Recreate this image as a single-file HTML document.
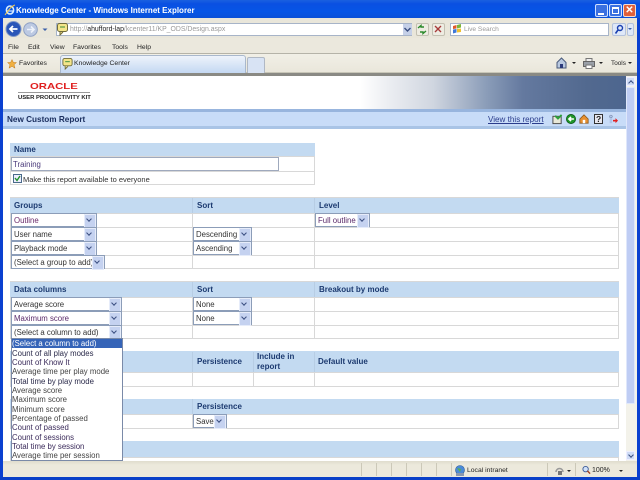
<!DOCTYPE html>
<html><head><meta charset="utf-8">
<style>
html,body{margin:0;padding:0;width:640px;height:480px;overflow:hidden;background:#fff}
body{position:relative;font-family:"Liberation Sans",sans-serif;font-size:7.8px;color:#222;filter:blur(.25px)}
div,span,svg{position:absolute;box-sizing:border-box;white-space:nowrap}
.h{background:#c3daf1;color:#1c3a70;font-weight:bold;font-size:8px;line-height:15px;padding-left:4px}
.l{background:#d8d8d8}
.s{background:#fff;border:1px solid #8c9db8;height:14px;line-height:13.5px;padding-left:2px;color:#333;font-size:7.8px}
.s b{position:absolute;right:0;top:0;width:10px;height:12px;background:#c5d2f0;border:1px solid #e6ecfa}
.s b:after{content:"";position:absolute;left:1.5px;top:2px;width:3px;height:3px;border-right:1.5px solid #3a4e80;border-bottom:1.5px solid #3a4e80;transform:rotate(45deg)}
.it{left:12px;width:108px;height:9.33px;line-height:9.33px;font-size:7.8px;color:#333}
.m{font-size:6.8px;color:#222;line-height:10px;top:43px}
.t{font-size:6.8px;color:#222;line-height:10px}
.c{background:#fff}
.sep{top:463px;width:1px;height:13px;background:#cbc8b8}
.ar{width:0;height:0;border:2px solid transparent;border-top:2px solid #222}
</style></head><body>

<!-- Window frame -->
<div style="left:0;top:0;width:640px;height:19px;background:linear-gradient(#1a60e0,#0a50e2 20%,#0655e6 60%,#0a4fd6)"></div>
<div style="left:0;top:18px;width:3px;height:462px;background:#0a40d0"></div>
<div style="left:637px;top:18px;width:3px;height:462px;background:#0a40d0"></div>
<div style="left:0;top:477px;width:640px;height:3px;background:#0a40c8"></div>
<svg style="left:4px;top:3px" width="12" height="14" viewBox="0 0 12 14"><ellipse cx="6" cy="7" rx="3.6" ry="4" fill="none" stroke="#d8ecff" stroke-width="1.6"/><path d="M2 8h7" stroke="#d8ecff" stroke-width="1.2"/><path d="M1 12C3 9 7 3 11 2" stroke="#f3c94c" stroke-width="1" fill="none"/></svg>
<div style="left:16px;top:4px;color:#fff;font-weight:bold;font-size:8px;line-height:13px">Knowledge Center - Windows Internet Explorer</div>
<div style="left:595px;top:4px;width:13px;height:13px;background:#3a70e0;border:1px solid #cfe0ff;border-radius:2px"><span style="left:2px;top:8px;width:6px;height:2px;background:#fff"></span></div>
<div style="left:609px;top:4px;width:13px;height:13px;background:#3a70e0;border:1px solid #cfe0ff;border-radius:2px"><span style="left:2px;top:2px;width:7px;height:7px;border:1px solid #fff;border-top:2px solid #fff"></span></div>
<div style="left:623px;top:4px;width:13px;height:13px;background:#e0603a;border:1px solid #f6dccf;border-radius:2px;color:#fff;font-weight:bold;font-size:10px;line-height:11px;text-align:center">✕</div>

<!-- Address row -->
<div style="left:3px;top:18px;width:634px;height:21px;background:#e9e6da"></div>
<svg style="left:5px;top:21px" width="44" height="17" viewBox="0 0 44 17">
<circle cx="8.5" cy="8" r="7.5" fill="#2a56b8" stroke="#7f97c8"/><path d="M12.5 8H5M8 5L5 8l3 3" stroke="#fff" stroke-width="1.8" fill="none"/>
<circle cx="25.5" cy="8.500" r="6.800" fill="#bcc9e2" stroke="#8ea0c4"/><path d="M22 8.500h7M26 5.500l3 3-3 3" stroke="#eef2fa" stroke-width="1.6" fill="none"/>
<path d="M37.500 7.500l2.500 2.500 2.500-2.500z" fill="#3a5fa8"/></svg>
<div style="left:56px;top:23px;width:356px;height:13px;background:#fff;border:1px solid #a7b4c8"></div>
<svg style="left:57px;top:23px" width="11" height="13" viewBox="0 0 11 13"><rect x=".5" y=".5" width="10" height="8" rx="2" fill="#f4e58a" stroke="#6f6a3a"/><path d="M3 9v3l3-3" fill="#f4e58a" stroke="#6f6a3a"/><path d="M3 4h5" stroke="#3a8a3a"/></svg>
<div style="left:70px;top:25px;font-size:6.9px;line-height:10px;color:#9a9a9a">http://<span style="position:static;color:#222">ahufford-lap</span>/kcenter11/KP_ODS/Design.aspx</div>
<div style="left:403px;top:24px;width:9px;height:11px;background:#c5d0e8"></div>
<svg style="left:404px;top:27px" width="7" height="6" viewBox="0 0 7 6"><path d="M.5 1l3 3 3-3" stroke="#3a4e80" stroke-width="1.4" fill="none"/></svg>
<div style="left:416px;top:23px;width:13px;height:13px;background:#eeece2;border:1px solid #c3c0b2;border-radius:2px"></div>
<svg style="left:417px;top:24px" width="10" height="11" viewBox="0 0 10 11"><path d="M1 4l3-2.500V3h3M9 7L6 9.500V8H3" fill="none" stroke="#2b8a2b" stroke-width="1.4"/></svg>
<div style="left:432px;top:23px;width:13px;height:13px;background:#eeece2;border:1px solid #c3c0b2;border-radius:2px"></div>
<svg style="left:434px;top:25px" width="8" height="8" viewBox="0 0 8 8"><path d="M1 1l6 6M7 1L1 7" stroke="#a83a3a" stroke-width="1.4"/></svg>
<div style="left:450px;top:23px;width:159px;height:13px;background:#fff;border:1px solid #a7b4c8"></div>
<svg style="left:452px;top:24px" width="10" height="10" viewBox="0 0 10 10"><path d="M1 2l3.500-1v3.500L1 5z" fill="#e0582a"/><path d="M5 1l4-1v3.500L5 4.500z" fill="#7cb53a"/><path d="M1 5.500l3.500-.5v3.500L1 9.500z" fill="#3f78d8"/><path d="M5 5l4-.5V8L5 8.500z" fill="#f0c030"/></svg>
<div style="left:464px;top:25px;font-size:6.6px;line-height:10px;color:#9a9a9a">Live Search</div>
<div style="left:612px;top:23px;width:14px;height:13px;background:#dfe8f8;border:1px solid #b4c2dc;border-radius:2px"></div>
<svg style="left:614px;top:24px" width="10" height="11" viewBox="0 0 10 11"><circle cx="6" cy="4" r="2.500" fill="none" stroke="#1a40b0" stroke-width="1.400"/><path d="M4 6L1.500 9.500" stroke="#1a40b0" stroke-width="1.600"/></svg>
<div style="left:627px;top:23px;width:7px;height:13px;background:#dfe8f8;border:1px solid #b4c2dc;border-radius:2px"></div>
<div style="left:628px;top:28px;width:0;height:0;border:2px solid transparent;border-top:2px solid #3a5fa8"></div>

<!-- Menu row -->
<div style="left:3px;top:38px;width:634px;height:16px;background:#ebe8dd"></div>
<div style="left:3px;top:53px;width:634px;height:1px;background:#b5b3a8"></div>
<div class="m" style="left:8px">File</div><div class="m" style="left:28px">Edit</div><div class="m" style="left:50px">View</div><div class="m" style="left:73px">Favorites</div><div class="m" style="left:112px">Tools</div><div class="m" style="left:137px">Help</div>

<!-- Tab row -->
<div style="left:3px;top:54px;width:634px;height:19px;background:linear-gradient(#f1efe6,#e9e6da)"></div>
<div style="left:3px;top:72px;width:634px;height:1px;background:#c8c6b8"></div>
<div style="left:3px;top:73px;width:634px;height:3px;background:#8a8a84"></div>
<svg style="left:7px;top:59px" width="10" height="10" viewBox="0 0 10 10"><path d="M5 .5l1.400 3H9.500L7 5.700l1 3.500L5 7.300 2 9.200l1-3.500L.5 3.500h3.100z" fill="#f0b040" stroke="#c07a20" stroke-width=".5"/></svg>
<div class="t" style="left:19px;top:59px">Favorites</div>
<div style="left:60px;top:55px;width:186px;height:18px;background:linear-gradient(#eef3fb,#c4d8f2);border:1px solid #a9b8cc;border-bottom:0;border-radius:3px 3px 0 0"></div>
<svg style="left:62px;top:58px" width="11" height="12" viewBox="0 0 11 13"><rect x=".5" y=".5" width="10" height="8" rx="2" fill="#f4e58a" stroke="#6f6a3a"/><path d="M3 9v3l3-3" fill="#f4e58a" stroke="#6f6a3a"/><path d="M3 4h5" stroke="#3a8a3a"/></svg>
<div class="t" style="left:74px;top:59px">Knowledge Center</div>
<div style="left:247px;top:57px;width:18px;height:16px;background:#d8e3f4;border:1px solid #b0b8c4;border-bottom:0;border-radius:2px 2px 0 0"></div>
<svg style="left:556px;top:57px" width="11" height="12" viewBox="0 0 11 12"><path d="M5.500 1L1 5.500V11h9V5.500z" fill="#b8c8e0" stroke="#4a5a7a"/><rect x="4" y="7" width="3" height="4" fill="#2a3a7a"/></svg>
<div class="ar" style="left:572px;top:62px"></div>
<svg style="left:583px;top:58px" width="12" height="11" viewBox="0 0 12 11"><rect x="3" y="0.500" width="6" height="3" fill="#eee" stroke="#777"/><rect x=".5" y="3.500" width="11" height="5" fill="#9aa0a8" stroke="#666"/><rect x="3" y="7" width="6" height="3.500" fill="#fff" stroke="#777"/></svg>
<div class="ar" style="left:599px;top:62px"></div>
<div class="t" style="left:611px;top:59px;font-size:6.400px">Tools</div>
<div class="ar" style="left:628px;top:62px"></div>

<!-- Header banner -->
<div style="left:3px;top:76px;width:623px;height:33px;background:linear-gradient(90deg,#fff 0,#fff 357px,#eceef2 385px,#d0d6e0 430px,#8a9cb8 484px,#64799f 520px,#52698f 584px,#4d668f 623px)"></div>
<div style="left:29.500px;top:81px;color:#e02020;font-size:8.400px;line-height:10px;font-weight:bold;transform:scaleX(1.350);transform-origin:0 0">ORACLE</div>
<div style="left:18px;top:92px;width:72px;height:1px;background:#9a9a9a"></div>
<div style="left:18px;top:94px;color:#222;font-size:5.900px;line-height:9px;font-weight:bold">USER PRODUCTIVITY KIT</div>

<!-- Title band -->
<div style="left:3px;top:109px;width:623px;height:3px;background:#98b5de"></div>
<div style="left:3px;top:112px;width:623px;height:14px;background:#c8dcf8"></div>
<div style="left:3px;top:126px;width:623px;height:3px;background:#a9c4e6"></div>
<div style="left:7px;top:114px;color:#1c3060;font-size:8.200px;line-height:12px;font-weight:bold">New Custom Report</div>
<div style="left:488px;top:114px;color:#2a3c8c;font-size:8.100px;line-height:12px;text-decoration:underline">View this report</div>
<svg style="left:552px;top:114px" width="11" height="11" viewBox="0 0 11 12"><rect x=".5" y="2.500" width="9" height="8" fill="#e8e8d8" stroke="#444"/><path d="M3 2l3 3 4-4" fill="none" stroke="#2aa03a" stroke-width="2"/></svg>
<svg style="left:566px;top:114px" width="10" height="10" viewBox="0 0 12 12"><circle cx="6" cy="6" r="5.500" fill="#20962a" stroke="#0d5a18"/><path d="M9.500 6H3.500M6 3.500L3.500 6 6 8.500" stroke="#fff" stroke-width="1.900" fill="none"/></svg>
<svg style="left:579px;top:114px" width="10" height="10" viewBox="0 0 12 12"><path d="M6 1L1 6v5h10V6z" fill="#e89030" stroke="#8a5a20"/><rect x="4.500" y="7" width="3" height="4" fill="#fff"/></svg>
<svg style="left:594px;top:114px" width="9" height="10" viewBox="0 0 9 10"><rect x=".5" y=".5" width="8" height="9" fill="#e8e8f0" stroke="#333"/></svg>
<div style="left:596px;top:114px;font-size:8.500px;line-height:10px;font-weight:bold;color:#222">?</div>
<svg style="left:608px;top:113px" width="10" height="12" viewBox="0 0 12 12"><circle cx="3.500" cy="3" r="1.700" fill="#b0c4e8" stroke="#5a6a8a" stroke-width=".5"/><rect x="2" y="5" width="3" height="6" fill="#b0c4e8"/><path d="M6 7h3V5l3 3-3 3V9H6z" fill="#e02020"/></svg>

<!-- Scrollbar -->
<div style="left:626px;top:76px;width:11px;height:385px;background:#f3f2ea"></div>
<div style="left:626px;top:77px;width:9px;height:9px;background:#cfdcf6;border:1px solid #eef"></div>
<div style="left:628.500px;top:80.500px;width:4px;height:4px;border-left:1.500px solid #3a4e80;border-top:1.500px solid #3a4e80;transform:rotate(45deg)"></div>
<div style="left:626px;top:87px;width:9px;height:317px;background:#bfcdf4;border:1px solid #dfe7fb;border-radius:1px"></div>
<div style="left:626px;top:451px;width:9px;height:9px;background:#cfdcf6;border:1px solid #eef"></div>
<div style="left:628.500px;top:452.500px;width:4px;height:4px;border-right:1.500px solid #3a4e80;border-bottom:1.500px solid #3a4e80;transform:rotate(45deg)"></div>

<!-- Name table -->
<div class="l" style="left:10px;top:143px;width:305px;height:42px"></div>
<div class="c" style="left:11px;top:157px;width:303px;height:14px"></div>
<div class="c" style="left:11px;top:172px;width:303px;height:12px"></div>
<div class="h" style="left:10px;top:143px;width:305px;height:13px;line-height:13px">Name</div>
<div style="left:11px;top:157px;width:268px;height:14px;background:#fff;border:1px solid #9fa9bd;line-height:13.500px;padding-left:1px;color:#4a3a7a">Training</div>
<div style="left:13px;top:174px;width:9px;height:9px;background:#eef;border:1px solid #4a6a8a"></div>
<svg style="left:14px;top:175px" width="7" height="7" viewBox="0 0 7 7"><path d="M1 3l2 2.500L6 1" stroke="#20902a" stroke-width="1.400" fill="none"/></svg>
<div style="left:23px;top:174px;line-height:11px;font-size:7.500px;color:#333">Make this report available to everyone</div>

<!-- Groups table -->
<div class="l" style="left:10px;top:197px;width:609px;height:72px"></div>
<div class="h" style="left:10px;top:198px;width:609px;height:15px">Groups</div>
<div class="h" style="left:197px;top:198px;width:110px;height:15px;background:none;padding:0">Sort</div>
<div class="h" style="left:319px;top:198px;width:110px;height:15px;background:none;padding-left:0">Level</div>
<div style="left:192px;top:198px;width:1px;height:15px;background:#b7cde4"></div>
<div style="left:314px;top:198px;width:1px;height:15px;background:#b7cde4"></div>
<div class="c" style="left:11px;top:214px;width:181px;height:13px"></div><div class="c" style="left:193px;top:214px;width:121px;height:13px"></div><div class="c" style="left:315px;top:214px;width:303px;height:13px"></div>
<div class="c" style="left:11px;top:228px;width:181px;height:13px"></div><div class="c" style="left:193px;top:228px;width:121px;height:13px"></div><div class="c" style="left:315px;top:228px;width:303px;height:13px"></div>
<div class="c" style="left:11px;top:242px;width:181px;height:13px"></div><div class="c" style="left:193px;top:242px;width:121px;height:13px"></div><div class="c" style="left:315px;top:242px;width:303px;height:13px"></div>
<div class="c" style="left:11px;top:256px;width:181px;height:12px"></div><div class="c" style="left:193px;top:256px;width:121px;height:12px"></div><div class="c" style="left:315px;top:256px;width:303px;height:12px"></div>
<div class="s" style="left:11px;top:213px;width:86px;color:#6a2a6a">Outline<b></b></div>
<div class="s" style="left:11px;top:227px;width:86px">User name<b></b></div>
<div class="s" style="left:11px;top:241px;width:86px">Playback mode<b></b></div>
<div class="s" style="left:11px;top:255px;width:94px">(Select a group to add)<b></b></div>
<div class="s" style="left:193px;top:227px;width:59px">Descending<b></b></div>
<div class="s" style="left:193px;top:241px;width:59px">Ascending<b></b></div>
<div class="s" style="left:315px;top:213px;width:55px;color:#5a2a6a">Full outline<b></b></div>

<!-- Data columns table -->
<div class="l" style="left:10px;top:281px;width:609px;height:58px"></div>
<div class="h" style="left:10px;top:282px;width:609px;height:15px">Data columns</div>
<div class="h" style="left:197px;top:282px;width:110px;height:15px;background:none;padding:0">Sort</div>
<div class="h" style="left:319px;top:282px;width:110px;height:15px;background:none;padding-left:0">Breakout by mode</div>
<div style="left:192px;top:282px;width:1px;height:15px;background:#b7cde4"></div>
<div style="left:314px;top:282px;width:1px;height:15px;background:#b7cde4"></div>
<div class="c" style="left:11px;top:298px;width:181px;height:13px"></div><div class="c" style="left:193px;top:298px;width:121px;height:13px"></div><div class="c" style="left:315px;top:298px;width:303px;height:13px"></div>
<div class="c" style="left:11px;top:312px;width:181px;height:13px"></div><div class="c" style="left:193px;top:312px;width:121px;height:13px"></div><div class="c" style="left:315px;top:312px;width:303px;height:13px"></div>
<div class="c" style="left:11px;top:326px;width:181px;height:12px"></div><div class="c" style="left:193px;top:326px;width:121px;height:12px"></div><div class="c" style="left:315px;top:326px;width:303px;height:12px"></div>
<div class="s" style="left:11px;top:297px;width:111px">Average score<b></b></div>
<div class="s" style="left:11px;top:311px;width:111px;color:#5a2a6a">Maximum score<b></b></div>
<div class="s" style="left:11px;top:325px;width:111px">(Select a column to add)<b></b></div>
<div class="s" style="left:193px;top:297px;width:59px">None<b></b></div>
<div class="s" style="left:193px;top:311px;width:59px">None<b></b></div>

<!-- Parameters table -->
<div class="l" style="left:10px;top:351px;width:609px;height:36px"></div>
<div class="h" style="left:10px;top:351px;width:609px;height:21px"></div>
<div class="h" style="left:197px;top:356px;background:none;padding:0;line-height:12px">Persistence</div>
<div class="h" style="left:257px;top:352px;background:none;padding:0;line-height:10px;white-space:normal;width:50px">Include in<br>report</div>
<div class="h" style="left:318px;top:356px;background:none;padding:0;line-height:12px">Default value</div>
<div style="left:192px;top:352px;width:1px;height:20px;background:#b7cde4"></div>
<div style="left:253px;top:352px;width:1px;height:20px;background:#b7cde4"></div>
<div style="left:314px;top:352px;width:1px;height:20px;background:#b7cde4"></div>
<div class="c" style="left:11px;top:373px;width:181px;height:13px"></div><div class="c" style="left:193px;top:373px;width:60px;height:13px"></div><div class="c" style="left:254px;top:373px;width:60px;height:13px"></div><div class="c" style="left:315px;top:373px;width:303px;height:13px"></div>

<!-- Filter table -->
<div class="l" style="left:10px;top:399px;width:609px;height:30px"></div>
<div class="h" style="left:10px;top:399px;width:609px;height:15px"></div>
<div class="h" style="left:197px;top:401px;background:none;padding:0;line-height:12px">Persistence</div>
<div style="left:192px;top:399px;width:1px;height:15px;background:#b7cde4"></div>
<div class="c" style="left:11px;top:415px;width:181px;height:13px"></div><div class="c" style="left:193px;top:415px;width:425px;height:13px"></div>
<div class="s" style="left:193px;top:414px;width:34px">Save<b></b></div>

<!-- Bottom table -->
<div class="l" style="left:10px;top:441px;width:609px;height:20px"></div>
<div class="c" style="left:11px;top:458px;width:607px;height:3px"></div>
<div class="h" style="left:10px;top:441px;width:609px;height:16px"></div>

<!-- Status bar -->
<div style="left:3px;top:461px;width:634px;height:16px;background:linear-gradient(#dfdccd,#ece9dc 25%,#ece9dc)"></div>
<div class="sep" style="left:361px"></div><div class="sep" style="left:376px"></div><div class="sep" style="left:391px"></div><div class="sep" style="left:406px"></div><div class="sep" style="left:421px"></div><div class="sep" style="left:436px"></div><div class="sep" style="left:451px"></div><div class="sep" style="left:547px"></div><div class="sep" style="left:575px"></div>
<svg style="left:454px;top:465px" width="12" height="12" viewBox="0 0 12 12"><circle cx="6" cy="5" r="4.500" fill="#4a8ad8" stroke="#2a5a98" stroke-width=".6"/><path d="M3 3l4 1-1 3z" fill="#5ab04a"/><rect x="2" y="8" width="8" height="3" fill="#8a98b0"/></svg>
<div class="t" style="left:467px;top:466px">Local intranet</div>
<svg style="left:554px;top:466px" width="11" height="10" viewBox="0 0 11 10"><path d="M2 6A3.500 3.500 0 0 1 9 6" fill="none" stroke="#9a9a9a" stroke-width="1.500"/><rect x="4" y="5" width="4" height="4" fill="#777"/></svg>
<div class="ar" style="left:567px;top:470px"></div>
<svg style="left:582px;top:465px" width="9" height="10" viewBox="0 0 10 10"><circle cx="4" cy="4" r="3" fill="#cfe0f8" stroke="#3a5a98"/><path d="M6 6l3 3" stroke="#a04020" stroke-width="1.500"/></svg>
<div class="t" style="left:592px;top:466px;font-size:7px">100%</div>
<div class="ar" style="left:619px;top:470px"></div>

<!-- Dropdown -->
<div style="left:11px;top:338px;width:112px;height:123px;background:#fff;border:1px solid #7a8aa8"></div>
<div style="left:12px;top:339px;width:110px;height:9px;background:#3564b8"></div>
<div class="it" style="top:339px;color:#fff">(Select a column to add)</div>
<div class="it" style="top:348.500px;color:#2a2a4a">Count of all play modes</div>
<div class="it" style="top:357.800px;color:#3a2a5a">Count of Know It</div>
<div class="it" style="top:367.200px;color:#444">Average time per play mode</div>
<div class="it" style="top:376.500px;color:#2a2a4a">Total time by play mode</div>
<div class="it" style="top:385.800px;color:#444">Average score</div>
<div class="it" style="top:395.200px;color:#444">Maximum score</div>
<div class="it" style="top:404.500px;color:#444">Minimum score</div>
<div class="it" style="top:413.800px;color:#444">Percentage of passed</div>
<div class="it" style="top:423.200px;color:#3a2a5a">Count of passed</div>
<div class="it" style="top:432.500px;color:#3a2a5a">Count of sessions</div>
<div class="it" style="top:441.800px;color:#3a2a5a">Total time by session</div>
<div class="it" style="top:451.200px;color:#444">Average time per session</div>

</body></html>
